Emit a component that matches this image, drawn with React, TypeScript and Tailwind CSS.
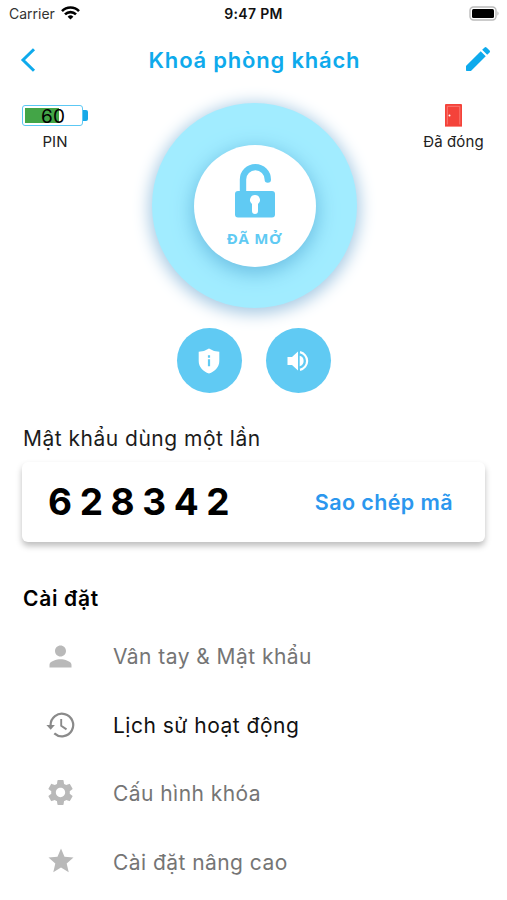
import { MdPerson, MdSettings, MdStar } from "react-icons/md";

function HistoryIcon() {
  return (
    <svg width="29" height="26" viewBox="0 0 29 26" fill="none" stroke="currentColor" strokeWidth="2.2">
      <path d="M4.600 14V13A11.300 11.300 0 1 1 8.300 21.400" />
      <path d="M15.200 7v6.800l5.300 3.600" strokeWidth="1.900" />
      <path d="M.4 13h8.500l-4.200 4.800z" fill="currentColor" stroke="none" />
    </svg>
  );
}

const settings = [
  { label: "Vân tay & Mật khẩu", icon: <MdPerson size={33} />, active: false },
  { label: "Lịch sử hoạt động", icon: <HistoryIcon />, active: true },
  { label: "Cấu hình khóa", icon: <MdSettings size={31} />, active: false },
  { label: "Cài đặt nâng cao", icon: <MdStar size={30} />, active: false },
];

function StatusBar() {
  return (
    <div className="grid h-7 grid-cols-3 items-center pl-[9px] pr-[7px] text-[14px]">
      <div className="-mt-px flex items-center gap-[6px] text-[#333]">
        <span>Carrier</span>
        <svg className="-mt-[2px]" width="19" height="14" viewBox="0 0 19 14" fill="none" stroke="#000" strokeWidth="2.6">
          <path d="M1 5.1a12 12 0 0 1 17 0" />
          <path d="M4 8.4a7.8 7.8 0 0 1 11 0" />
          <path d="M9.5 13.6 6.6 10.7a4.1 4.1 0 0 1 5.8 0Z" fill="#000" stroke="none" />
        </svg>
      </div>
      <span className="-ml-[2px] -mt-px whitespace-nowrap text-center font-semibold tracking-[0.3px] text-[#111]">9:47 PM</span>
      <svg className="-mt-[2px] justify-self-end" width="31" height="15" viewBox="0 0 31 15">
        <rect x="1" y="1" width="26" height="13" rx="3.5" fill="#fff" stroke="#bbb" strokeWidth="1.4" />
        <rect x="3" y="3" width="22" height="9" rx="1.5" />
        <path d="M28.5 5.3q2 2.2 0 4.4z" fill="#aaa" />
      </svg>
    </div>
  );
}

export default function App() {
  return (
    <div className="h-[900px] w-[507px] overflow-hidden bg-white font-['Inter',sans-serif] text-black">
      <StatusBar />

      <header className="grid h-16 grid-cols-[64px_1fr_64px] items-center pl-[20px] pr-[13px] text-[#0eaaec]">
        <svg width="16" height="24" viewBox="0 0 16 24" fill="none" stroke="currentColor" strokeWidth="3">
          <path d="M14 1.2 3 12l11 10.8" />
        </svg>
        <h1 className="-ml-[5px] text-center text-[22px] font-semibold tracking-[0.8px]">Khoá phòng khách</h1>
        <svg className="-mt-[2px] justify-self-end" width="32" height="32" viewBox="0 0 24 24" fill="currentColor">
          <path d="M3 17.46v3.04c0 .28.22.5.5.5h3.04c.13 0 .26-.05.35-.15L17.81 9.94l-3.75-3.75L3.15 17.1q-.15.15-.15.36zM20.71 7.04a1 1 0 0 0 0-1.41l-2.34-2.34a1 1 0 0 0-1.41 0l-1.83 1.83 3.75 3.75z" />
        </svg>
      </header>

      <section className="flex justify-between pl-[22px] pr-[22px]">
        <div className="flex w-[66px] flex-col items-center pt-[13px]">
          <div className="flex w-full items-center">
            <div className="relative h-[21px] w-[61px] rounded-[3px] border border-[#5cc8f4] p-[2px]">
              <div className="h-full w-[34px] bg-[#43a547]" />
              <span className="absolute inset-0 pl-px text-center text-[19px] leading-[21px]">60</span>
            </div>
            <div className="h-[11px] w-[5px] rounded-r-[2px] bg-[#16a9e8]" />
          </div>
          <span className="mt-[6px] text-[15px] leading-5 text-[#222]">PIN</span>
        </div>

        <div className="mt-[11px] flex h-[205px] w-[205px] items-center justify-center rounded-full bg-[#a1ecff] shadow-[0_3px_16px_3px_#a9cbe4]">
          <div className="flex h-[122px] w-[122px] flex-col items-center rounded-full bg-white pt-[18px] text-[#60caf3] shadow-[0_5px_20px_1px_#6abde2]">
            <svg width="42" height="55" viewBox="0 0 42 55">
              <path d="M9 30V16.500a12.400 12.400 0 0 1 24.800 0" fill="none" stroke="currentColor" strokeWidth="6.400" strokeLinecap="round" />
              <rect x="1" y="28" width="40" height="26.500" rx="3" fill="currentColor" />
              <path d="M21 32a5 5 0 0 1 3 9v7a3 3 0 0 1-6 0v-7a5 5 0 0 1 3-9z" fill="#fff" />
            </svg>
            <span className="mt-[10px] font-['Open_Sans',sans-serif] text-[15px] font-bold leading-5 tracking-[0.7px]">ĐÃ MỞ</span>
          </div>
        </div>

        <div className="flex w-[64px] flex-col items-center pt-[12px]">
          <svg width="17" height="23" viewBox="0 0 17 23">
            <rect width="17" height="23" rx="1" fill="#f4433a" />
            <path d="M2.3 20.5V2.300h12.500v18.200" fill="none" stroke="#fb7a73" />
            <path d="M0 22.500h17" stroke="#fb8b84" />
            <circle cx="4.5" cy="11.5" r="1" fill="#fff" />
          </svg>
          <span className="mt-[5px] whitespace-nowrap pl-px text-[15px] leading-5 tracking-[0.1px] text-[#222]">Đã đóng</span>
        </div>
      </section>

      <div className="mt-[20px] flex justify-center gap-[24px] text-white">
        <button className="flex h-[65px] w-[65px] items-center justify-center rounded-full bg-[#60caf3]">
          <svg width="22" height="26" viewBox="0 0 22 26">
            <path d="M11 .5Q15 3.400 21.300 3.800V13C21.300 19 17 23.500 11 25.500 5 23.500.7 19 .7 13V3.800Q7 3.400 11 .5z" fill="currentColor" />
            <path d="M11 7.300v2.400M11 11.300v7" stroke="#60caf3" strokeWidth="2.2" />
          </svg>
        </button>
        <button className="flex h-[65px] w-[65px] items-center justify-center rounded-full bg-[#60caf3]">
          <svg width="22" height="22" viewBox="0 0 22 22" fill="currentColor">
            <path d="M.5 7v8h4.500l6 5.500V1.500L5 7zM12.700 5.800v10.400a5.400 5.400 0 0 0 0-10.400z" />
            <path d="M13 2.200a9 9 0 0 1 0 17.600" fill="none" stroke="currentColor" strokeWidth="2.200" />
          </svg>
        </button>
      </div>

      <section className="mt-[30px] px-[22px]">
        <h2 className="pl-px text-[21px] leading-8 tracking-[0.5px] text-[#1c1c1c]">Mật khẩu dùng một lần</h2>
        <div className="mt-[7px] flex h-[80px] items-center justify-between rounded-[6px] bg-white pl-[26px] pr-[32px] shadow-[0_4px_6px_rgba(0,0,0,0.26)]">
          <span className="text-[37px] font-bold tracking-[7.6px]">628342</span>
          <button className="text-[21.5px] font-semibold tracking-[0.4px] text-[#2b97ee]">Sao chép mã</button>
        </div>
      </section>

      <section className="mt-[41px]">
        <h2 className="pl-[23px] text-[21px] font-semibold leading-8 tracking-[0.7px]">Cài đặt</h2>
        <ul className="mt-[7px]">
          {settings.map((item) => (
            <li key={item.label} className="flex h-[68.4px] items-center">
              <span className={item.active ? "ml-[44px] flex w-[33px] justify-center text-[#8a8a8a]" : "ml-[44px] flex w-[33px] justify-center text-[#b9b9b9]"}>
                {item.icon}
              </span>
              <span className={item.active ? "ml-[36px] pt-[2px] text-[21px] tracking-[0.5px] text-[#111]" : "ml-[36px] pt-[2px] text-[21px] tracking-[0.45px] text-[#757575]"}>
                {item.label}
              </span>
            </li>
          ))}
        </ul>
      </section>
    </div>
  );
}
